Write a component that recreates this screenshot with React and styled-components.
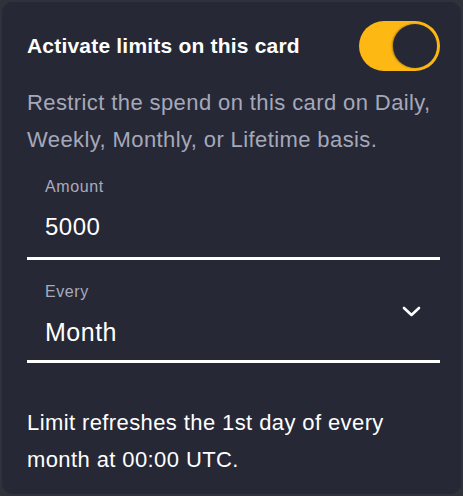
import React, { useState } from 'react';
import styled, { createGlobalStyle } from 'styled-components';

const GlobalStyle = createGlobalStyle`
    html, body {
        margin: 0;
        padding: 0;
        background: #30313b;
    }
    body {
        font-family: 'Liberation Sans', Arial, sans-serif;
    }
`;

const Page = styled.div`
    padding: 2px;
    width: 463px;
    height: 496px;
    box-sizing: border-box;
`;

const Card = styled.div`
    background: #272835;
    border-radius: 10px;
    height: 492px;
    box-sizing: border-box;
    padding: 19px 21px 0 25px;
    color: #fff;
`;

const Header = styled.div`
    display: flex;
    align-items: center;
    justify-content: space-between;
`;

const Title = styled.h3`
    margin: 0;
    font-size: 21px;
    line-height: 24px;
    font-weight: 700;
    letter-spacing: 0.2px;
    color: #ffffff;
`;

const Toggle = styled.button`
    display: flex;
    justify-content: ${(p) => (p.$on ? 'flex-end' : 'flex-start')};
    align-items: center;
    width: 81px;
    height: 50px;
    padding: 3px;
    border: none;
    border-radius: 25px;
    background: ${(p) => (p.$on ? '#fdb813' : '#4a4c5c')};
    cursor: pointer;
    box-sizing: border-box;
`;

const Knob = styled.span`
    width: 44px;
    height: 44px;
    border-radius: 50%;
    background: #272835;
    box-shadow: -1px 0 2px rgba(0, 0, 0, 0.35);
`;

const Description = styled.p`
    margin: 13px 0 0;
    font-size: 22px;
    line-height: 37px;
    letter-spacing: 0.4px;
    color: #a5a8ba;
`;

const Field = styled.div`
    display: flex;
    align-items: center;
    margin-top: ${(p) => p.$top}px;
    padding: 0 19px ${(p) => p.$bottom}px 18px;
    border-bottom: 3px solid #ffffff;
`;

const FieldBody = styled.div`
    flex: 1;
    display: flex;
    flex-direction: column;
    gap: 15px;
`;

const Label = styled.label`
    font-size: 16px;
    line-height: 20px;
    letter-spacing: 0.6px;
    color: #a9abbd;
`;

const Value = styled.div`
    font-size: ${(p) => p.$size}px;
    line-height: 30px;
    letter-spacing: 0.5px;
    color: #ffffff;
`;

const Chevron = styled.svg`
    width: 19px;
    height: 11px;
    margin-top: -6px;
`;

const Note = styled.p`
    margin: 41px 0 0;
    font-size: 22px;
    line-height: 37px;
    letter-spacing: 0.4px;
    color: #ffffff;
`;

function App() {
    const [active, setActive] = useState(true);

    return (
        <Page>
            <GlobalStyle />
            <Card>
                <Header>
                    <Title>Activate limits on this card</Title>
                    <Toggle
                        $on={active}
                        aria-pressed={active}
                        onClick={() => setActive(!active)}
                    >
                        <Knob />
                    </Toggle>
                </Header>
                <Description>
                    Restrict the spend on this card on Daily, Weekly, Monthly,
                    or Lifetime basis.
                </Description>
                <Field $top={19} $bottom={15}>
                    <FieldBody>
                        <Label>Amount</Label>
                        <Value $size={24}>5000</Value>
                    </FieldBody>
                </Field>
                <Field $top={22} $bottom={13}>
                    <FieldBody>
                        <Label>Every</Label>
                        <Value $size={25}>Month</Value>
                    </FieldBody>
                    <Chevron viewBox="0 0 19 11" fill="none">
                        <path
                            d="M2 2l7.5 7 7.5-7"
                            stroke="#fff"
                            strokeWidth="2.6"
                            strokeLinecap="round"
                            strokeLinejoin="round"
                        />
                    </Chevron>
                </Field>
                <Note>
                    Limit refreshes the 1st day of every month at 00:00 UTC.
                </Note>
            </Card>
        </Page>
    );
}

export default App;
